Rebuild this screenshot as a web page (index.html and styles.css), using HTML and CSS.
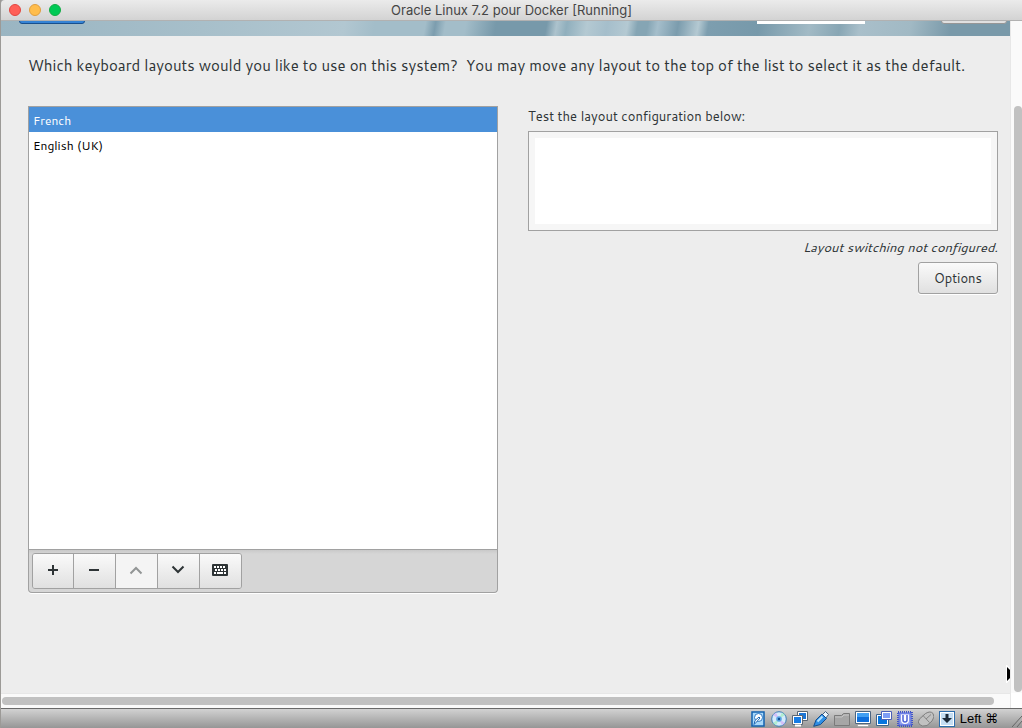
FILE: index.html
```html
<!DOCTYPE html>
<html lang="en">
<head>
  <meta charset="UTF-8">
  <meta name="viewport" content="width=device-width, initial-scale=1.0">
  <title>Oracle Linux 7.2 pour Docker [Running]</title>
  <link rel="stylesheet" href="styles.css">
</head>
<body>
  <div class="window">
    <header class="titlebar">
      <div class="lights">
        <button class="light close" aria-label="Close"></button>
        <button class="light minimize" aria-label="Minimize"></button>
        <button class="light zoom" aria-label="Zoom"></button>
      </div>
      <h1>Oracle Linux 7.2 pour Docker [Running]</h1>
    </header>

    <div class="viewport">
      <div class="screen">
        <div class="banner">
          <button class="banner-button done" aria-label="Done"></button>
          <div class="indicator"></div>
          <button class="banner-button help" aria-label="Help"></button>
        </div>
        <main>
          <p class="intro">Which keyboard layouts would you like to use on this system?&nbsp; You may move any layout to the top of the list to select it as the default.</p>
          <div class="columns">
            <section class="layouts">
              <ul class="list" role="listbox" aria-label="Keyboard layouts">
                <li role="option" aria-selected="true">French</li>
                <li role="option" aria-selected="false">English (UK)</li>
              </ul>
              <div class="toolbar">
                <div class="group">
                  <button aria-label="Add layout"><svg width="16" height="16" viewBox="0 0 16 16"><path d="M3 8h10M8 3v10" stroke="#2e3436" stroke-width="2"/></svg></button>
                  <button aria-label="Remove layout"><svg width="16" height="16" viewBox="0 0 16 16"><path d="M3 8h10" stroke="#2e3436" stroke-width="2"/></svg></button>
                  <button aria-label="Move up" disabled><svg width="16" height="16" viewBox="0 0 16 16"><path d="M2.500 11.500L8 6l5.500 5.500" fill="none" stroke="#929595" stroke-width="2"/></svg></button>
                  <button aria-label="Move down"><svg width="16" height="16" viewBox="0 0 16 16"><path d="M2.500 4.500L8 10l5.500-5.500" fill="none" stroke="#2e3436" stroke-width="2"/></svg></button>
                  <button aria-label="Preview layout"><svg width="16" height="16" viewBox="0 0 16 16"><rect y="2" width="16" height="12" rx="1" fill="#2e3436"/><path d="M2 5h2m1 0h2m1 0h2m1 0h2M3 8h2m1 0h2m1 0h2m1 0h2M2 11h2m1 0h6m1 0h2" stroke="#fff" stroke-width="2"/></svg></button>
                </div>
              </div>
            </section>
            <section class="test">
              <label for="test">Test the layout configuration below:</label>
              <textarea id="test"></textarea>
              <p class="hint">Layout switching not configured.</p>
              <button class="options">Options</button>
            </section>
          </div>
        </main>
        <svg class="pointer" width="4" height="18" viewBox="0 0 4 18"><path d="M0 0h1l3 3v12l-3 3H0z" fill="#fff"/><path d="M1 2l3 3v8l-3 3z" fill="#000"/></svg>
      </div>
      <div class="scroll-y"><div class="thumb"></div></div>
      <div class="scroll-x"><div class="thumb"></div></div>
      <div class="corner"></div>
    </div>

    <footer class="statusbar">
      <!-- hard disk -->
      <svg viewBox="0 0 16 16"><path d="M2 1h12v14H2z" fill="#a8d8fa" stroke="#1261b0" stroke-width="1.500"/><circle cx="8.500" cy="6.500" r="4" fill="#fff" stroke="#2a78c4"/><path d="M4 13.500l1-4 4-3.500 1 1-3.500 4z" fill="#fff" stroke="#1a66b4"/></svg>
      <!-- optical disc -->
      <svg viewBox="0 0 16 16"><circle cx="8" cy="8" r="7.300" fill="#d4ebfb" stroke="#3f7fb8"/><path d="M8 8L2 4l3-2.500zM8 8l6 4-3 2.500z" fill="#d3bff8"/><path d="M8 8l-3 6.500L2 12zM8 8l3-6.500L14 4z" fill="#b0edcf"/><circle cx="8" cy="8" r="2.800" fill="#5aa6e6"/><circle cx="8" cy="8" r="1.200" fill="#124f91"/></svg>
      <!-- network -->
      <svg viewBox="0 0 16 16"><path d="M5.500.5h10v9h-10z" fill="#fff" stroke="#5b6672"/><path d="M7 2h7v6H7z" fill="#1b76d7"/><path d="M.5 4.500h10v9H.5z" fill="#fff" stroke="#5b6672"/><path d="M2 6h7v6H2z" fill="#167ce5"/><path d="M3 14.500h6" stroke="#fff" stroke-width="2"/></svg>
      <!-- usb -->
      <svg viewBox="0 0 16 16"><path d="M9.500 3.500l3-3 3 3-3 4z" fill="#eef6fc" stroke="#46617c"/><path d="M.7 15.300L3 9l6-6 4.500 4.500-6 6z" fill="#2f8fe6" stroke="#144d8c"/><path d="M4.500 10.500l5-5" stroke="#b5e3ff" stroke-width="2"/></svg>
      <!-- shared folders -->
      <svg viewBox="0 0 16 16"><path d="M.5 14.500V4.500h7l2-2h6v12z" fill="#a6a6a6" stroke="#7a7a7a"/><path d="M1 6h7l2-2h5" fill="none" stroke="#c6c6c6"/></svg>
      <!-- display -->
      <svg viewBox="0 0 16 16"><path d="M.5.5h15v12H.5z" fill="#fff" stroke="#4c6580"/><path d="M2 2h12v9H2z" fill="#0f6fdc"/><path d="M2 2h12v4H2z" fill="#429ff2"/><path d="M2.500 13.500h11v2h-11z" fill="#fff" stroke="#8a8a8a" stroke-width=".5"/></svg>
      <!-- video capture -->
      <svg viewBox="0 0 16 16"><path d="M.5 3.500h12v11H.5z" fill="#fff" stroke="#41648a"/><path d="M2 5h9v8H2z" fill="#0875dd"/><path d="M5.500.5h10v8h-10z" fill="#fff" stroke="#4a5fb8"/><path d="M7 2h7v5H7z" fill="#7e9df5"/></svg>
      <!-- virtualization -->
      <svg viewBox="0 0 16 16"><path d="M1 1h14v14H1z" fill="none" stroke="#3f51c4" stroke-width="2" stroke-dasharray="1 1"/><path d="M2 2h12v12H2z" fill="#8f9df0" stroke="#5368dc"/><path d="M4 3.500h8V9q0 4-4 4T4 9z" fill="#fff"/><path d="M6 4v5q0 2 2 2t2-2V4" fill="none" stroke="#4d61d6" stroke-width="1.500"/></svg>
      <!-- mouse -->
      <svg viewBox="0 0 16 16"><path d="M1.500 8l6-5.500q5-3 7.500 0t-1 7.500l-5 4.500q-5 1.500-7.500-1t0-5.500z" fill="#c1c1c1" stroke="#7d7d7d"/><path d="M5 4.500l6.500 7M8 8l5-4.500" stroke="#868686"/></svg>
      <!-- keyboard capture -->
      <svg viewBox="0 0 16 16"><rect x=".5" y=".5" width="15" height="15" fill="#fff" stroke="#2e6eae"/><path d="M2 2h12v12H2z" fill="#c5def3"/><path d="M6.500 3h3v4H13l-5 5-5-5h3.500z" fill="#1d2a38"/></svg>
      <span>Left ⌘</span>
      <svg class="grip" viewBox="0 0 10 16"><path d="M0 16L10 5M5 16l5-6" stroke="#666"/></svg>
    </footer>
  </div>
</body>
</html>
```
FILE: styles.css
```css
* {
  box-sizing: border-box;
}
body {
  margin: 0;
  font-family: Cantarell, "Open Sans", sans-serif;
  font-size: 13px;
  color: #2e3436;
  background-color: #a0a0a0;
}
button {
  padding: 0;
  font-family: inherit;
  font-size: inherit;
  color: inherit;
}
.window {
  display: flex;
  flex-direction: column;
  min-height: 100vh;
  border-left: 1px solid #9c9a97;
}
.titlebar {
  position: relative;
  height: 21px;
  border-bottom: 1px solid #b1b1b1;
  border-top-left-radius: 4px;
  background: linear-gradient(#ebebeb, #d3d3d3);
}
.titlebar h1 {
  margin: 0;
  font: 13px/20px Inter, sans-serif;
  color: #454545;
  text-align: center;
}
.lights {
  position: absolute;
  top: 4px;
  left: 8px;
  display: flex;
  gap: 8px;
}
.light {
  width: 12px;
  height: 12px;
  border: 1px solid #e2463f;
  border-radius: 50%;
  background-color: #ff5f57;
}
.minimize {
  border-color: #e09e3e;
  background-color: #ffbd4c;
}
.zoom {
  border-color: #12ac45;
  background-color: #00ca56;
}
.viewport {
  flex: 1;
  display: grid;
  grid-template-columns: 1fr 12px;
  grid-template-rows: 1fr 15px;
}
.screen {
  position: relative;
  display: flex;
  flex-direction: column;
  background-color: #ededed;
}
.banner {
  display: flex;
  height: 15px;
  padding: 0 3px 0 18px;
  overflow: hidden;
  background: linear-gradient(100deg, #9ab5c2 0%, #a7bfca 20%, #b2c7d1 34%, #a3bdc9 37%, #a3bdc9 42%, #7c9dae 43%, #a3bdc9 44%, #a3bdc9 46%, #7799aa 49%, #7799aa 54%, #adc3cd 55%, #90afbd 56%, #b4c9d2 58%, #a5becb 60%, #b4c9d2 62%, #85a5b4 63%, #85a5b4 64%, #a5becb 65%, #7b9cad 67%, #b4c9d2 69%, #7d9eaf 70%, #7799aa 75%, #a2bac5 80%, #88a6b4 83%, #a9bfca 85%, #a1b9c4 90%, #7999a9 94%, #7999a9 100%);
}
.banner-button {
  width: 66px;
  height: 26px;
  margin-top: -23px;
  border: 1px solid #969696;
  border-radius: 3px;
  background-color: #e0e0e0;
}
.done {
  border-color: #184f8d;
  background-color: #3583d5;
}
.indicator {
  width: 108px;
  height: 3px;
  margin-left: auto;
  margin-right: 76px;
  background-color: #fff;
}
main {
  flex: 1;
  display: flex;
  flex-direction: column;
  padding: 18px 12px 100px 27px;
}
.intro {
  margin: 0 0 28px;
  font-size: 15px;
  line-height: 24px;
  white-space: nowrap;
}
.columns {
  flex: 1;
  display: grid;
  grid-template-columns: 1fr 1fr;
  gap: 30px;
}
.layouts {
  display: flex;
  flex-direction: column;
}
.list {
  flex: 1;
  margin: 0;
  padding: 0;
  border: 1px solid #a1a1a1;
  background-color: #fff;
  list-style: none;
  font-size: 12px;
  color: #000;
}
.list li {
  height: 25px;
  padding: 1px 4px 0;
  line-height: 25px;
}
.list li[aria-selected="true"] {
  background-color: #4a90d9;
  color: #fff;
}
.toolbar {
  padding: 3px;
  border: 1px solid #a1a1a1;
  border-top: 0;
  border-radius: 0 0 4px 4px;
  background: linear-gradient(#c9c9c9, #d6d6d6 4px);
  box-shadow: 0 1px #fff;
}
.group {
  display: inline-flex;
  vertical-align: top;
  border: 1px solid #a1a1a1;
  border-radius: 3px;
  overflow: hidden;
}
.group button {
  display: flex;
  align-items: center;
  justify-content: center;
  width: 42px;
  height: 34px;
  padding: 0 1px 2px 0;
  border: 0;
  border-right: 1px solid #a1a1a1;
  background: linear-gradient(#fafafa, #e0e0e0);
}
.group button:first-child,
.group button:last-child {
  width: 41px;
}
.group button:last-child {
  border-right: 0;
}
.group button:disabled {
  background: #f4f4f4;
}
.test {
  display: flex;
  flex-direction: column;
}
.test label {
  margin-bottom: 4px;
  line-height: 21px;
}
.test textarea {
  height: 100px;
  padding: 0;
  border: 1px solid #a1a1a1;
  outline: 6px solid #f6f6f6;
  outline-offset: -7px;
  background-color: #fff;
  resize: none;
}
.hint {
  margin: 6px 0 5px;
  line-height: 20px;
  font-style: italic;
  text-align: right;
}
.options {
  align-self: flex-end;
  width: 80px;
  height: 32px;
  border: 1px solid #a1a1a1;
  border-radius: 3px;
  background: linear-gradient(#fafafa, #e0e0e0);
  box-shadow: 0 1px #fff;
}
.pointer {
  position: absolute;
  right: 0;
  bottom: 10px;
}
.scroll-y {
  display: flex;
  padding: 85px 0 1px 3px;
  border-left: 1px solid #e7e7e7;
  background-color: #fafafa;
}
.scroll-x {
  padding: 3px 16px 3px 1px;
  border-top: 1px solid #e7e7e7;
  background-color: #fafafa;
}
.thumb {
  flex: 1;
  border-radius: 4px;
  background-color: #c1c1c1;
}
.scroll-x .thumb {
  height: 8px;
}
.corner {
  border-left: 1px solid #e7e7e7;
  background-color: #fff;
}
.statusbar {
  display: flex;
  align-items: center;
  justify-content: flex-end;
  gap: 5px;
  height: 20px;
  border-top: 1px solid #696969;
  background: linear-gradient(#d2d2d2, #969696);
}
.statusbar svg {
  width: 16px;
  height: 16px;
}
.statusbar span {
  font: 13px/18px "Liberation Sans", "DejaVu Sans", sans-serif;
  color: #000;
}
.statusbar .grip {
  width: 10px;
  margin-left: 9px;
}
```
